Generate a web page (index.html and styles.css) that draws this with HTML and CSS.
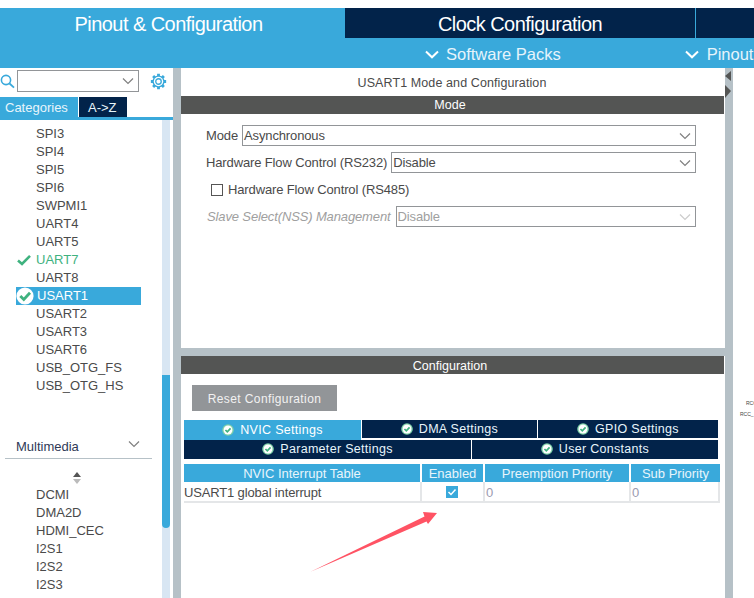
FILE: index.html
```html
<!DOCTYPE html>
<html lang="en">
<head>
<meta charset="utf-8">
<title>USART1 Mode and Configuration</title>
<link rel="stylesheet" href="styles.css">
</head>
<body>
<svg width="0" height="0" class="defs">
  <defs>
    <symbol id="chev" viewBox="0 0 12 8"><path d="M1 1.500 6 6.500 11 1.500" fill="none" stroke="currentColor" stroke-width="1.200"/></symbol>
    <symbol id="subchev" viewBox="0 0 14 9"><path d="M1 1.500 7 7.300 13 1.500" fill="none" stroke="currentColor" stroke-width="2"/></symbol>
    <symbol id="ok" viewBox="0 0 14 14"><circle cx="7" cy="7" r="6.800" fill="#7fd0a8"/><circle cx="7" cy="7" r="5.200" fill="#fff"/><path d="M4 7 6.200 9.200 10 5.200" fill="none" stroke="#3fb27f" stroke-width="2"/></symbol>
    <symbol id="okbig" viewBox="0 0 18 18"><circle cx="9" cy="9" r="8.600" fill="#fff"/><path d="M4.300 9 7.800 12.500 14 5.800" fill="none" stroke="#3fb27f" stroke-width="2.800"/></symbol>
  </defs>
</svg>
<div class="page">
  <header class="top">
    <div class="tabs">
      <div class="tab tab-on">Pinout &amp; Configuration</div>
      <div class="tab tab-clock">Clock Configuration</div>
      <div class="tab tab-rest"></div>
    </div>
    <div class="subbar">
      <div class="sub sub-packs"><svg class="sub-chev"><use href="#subchev"/></svg>Software Packs</div>
      <div class="sub sub-pinout"><svg class="sub-chev"><use href="#subchev"/></svg>Pinout</div>
    </div>
  </header>
  <div class="body">
    <aside class="left">
      <div class="search">
        <svg class="mag" viewBox="0 0 15 15"><circle cx="6" cy="6" r="4.600" fill="none" stroke="#39a9db" stroke-width="1.600"/><path d="M9.500 9.500 14 13.600" stroke="#39a9db" stroke-width="1.800"/></svg>
        <div class="sel sel-search"><svg class="chev"><use href="#chev"/></svg></div>
        <svg class="gear" viewBox="0 0 18 18"><path d="M9 .9v16.200M.9 9h16.200M3.300 3.300l11.400 11.400M3.300 14.700 14.700 3.300" stroke="#39a9db" stroke-width="3"/><circle cx="9" cy="9" r="6.400" fill="#39a9db"/><circle cx="9" cy="9" r="5" fill="#fff"/><circle cx="9" cy="9" r="2.900" fill="none" stroke="#39a9db" stroke-width="1.400"/></svg>
      </div>
      <div class="cat-tabs">
        <div class="cat cat-on">Categories</div>
        <div class="cat cat-off">A-&gt;Z</div>
      </div>
      <div class="listwrap">
        <div class="list">
          <ul class="items">
            <li>SPI3</li><li>SPI4</li><li>SPI5</li><li>SPI6</li><li>SWPMI1</li><li>UART4</li><li>UART5</li>
            <li class="green"><svg class="tick" viewBox="0 0 14 12"><path d="M1 6.500 5 10 13 1.800" fill="none" stroke="#3fb27f" stroke-width="2.600"/></svg>UART7</li>
            <li>UART8</li>
            <li class="picked"><svg class="okbig"><use href="#okbig"/></svg>USART1</li>
            <li>USART2</li><li>USART3</li><li>USART6</li><li>USB_OTG_FS</li><li>USB_OTG_HS</li>
          </ul>
          <div class="group">Multimedia<svg class="chev-group"><use href="#chev"/></svg></div>
          <div class="sort"><svg viewBox="0 0 8 12" width="8" height="12"><path d="M4 0 8 5H0Z" fill="#555"/><path d="M4 12 8 7H0Z" fill="#bbb"/></svg></div>
          <ul class="items items-media">
            <li>DCMI</li><li>DMA2D</li><li>HDMI_CEC</li><li>I2S1</li><li>I2S2</li><li>I2S3</li><li>JPEG</li>
          </ul>
        </div>
        <div class="track"><div class="thumb"></div></div>
      </div>
    </aside>
    <div class="split"></div>
    <main class="main">
      <section class="mode">
        <h1 class="title">USART1 Mode and Configuration</h1>
        <div class="bar">Mode</div>
        <div class="form">
          <div class="row"><span>Mode</span><div class="sel">Asynchronous<svg class="chev"><use href="#chev"/></svg></div></div>
          <div class="row"><span>Hardware Flow Control (RS232)</span><div class="sel">Disable<svg class="chev"><use href="#chev"/></svg></div></div>
          <div class="row row-check"><i class="box"></i><span>Hardware Flow Control (RS485)</span></div>
          <div class="row row-off"><span>Slave Select(NSS) Management</span><div class="sel">Disable<svg class="chev"><use href="#chev"/></svg></div></div>
        </div>
      </section>
      <div class="hsplit"></div>
      <section class="config">
        <div class="bar">Configuration</div>
        <button class="reset">Reset Configuration</button>
        <div class="ctabs ctabs-1">
          <div class="ctab c-on c-nvic"><svg class="ok"><use href="#ok"/></svg>NVIC Settings</div>
          <div class="ctab c-dma"><svg class="ok"><use href="#ok"/></svg>DMA Settings</div>
          <div class="ctab c-gpio"><svg class="ok"><use href="#ok"/></svg>GPIO Settings</div>
        </div>
        <div class="ctabs ctabs-2">
          <div class="ctab c-param"><svg class="ok"><use href="#ok"/></svg>Parameter Settings</div>
          <div class="ctab c-user"><svg class="ok"><use href="#ok"/></svg>User Constants</div>
        </div>
        <div class="table">
          <div class="th">NVIC Interrupt Table</div>
          <div class="th">Enabled</div>
          <div class="th">Preemption Priority</div>
          <div class="th">Sub Priority</div>
          <div class="td">USART1 global interrupt</div>
          <div class="td td-c"><svg class="checked" viewBox="0 0 12 12"><rect width="12" height="12" fill="#39a9db"/><path d="M2.500 6 5 8.500 9.500 3.500" fill="none" stroke="#fff" stroke-width="1.500"/></svg></div>
          <div class="td td-n">0</div>
          <div class="td td-n">0</div>
        </div>
      </section>
    </main>
    <div class="split split-r">
      <svg class="arrows" viewBox="0 0 7 28" width="7" height="28"><path d="M6 1V11L0 6Z" fill="#545554"/><path d="M0 15V28L6 21Z" fill="#545554"/></svg>
    </div>
    <div class="canvas"></div>
  </div>
</div>
<span class="pin pin-a">RCC</span>
<span class="pin pin-b">RCC_</span>
<svg class="arrow" viewBox="0 0 754 598" width="754" height="598"><path d="M310 572 424.500 516.500 423 512 437 513 428 524 426.500 521.500Z" fill="#ff5364"/></svg>
</body>
</html>
```

FILE: styles.css
```css
* { box-sizing: border-box; }
html, body { margin: 0; padding: 0; background: #fff; }
body { width: 754px; height: 598px; overflow: hidden; position: relative; font-family: "Liberation Sans", Arial, sans-serif; color: #4a4a4a; }
.defs { position: absolute; }
.page { padding-top: 8px; height: 598px; display: flex; flex-direction: column; }

.top { background: #39a9db; height: 60px; flex: none; }
.tabs { display: flex; height: 30px; color: #fff; font-size: 20px; letter-spacing: -0.55px; }
.tab { display: flex; align-items: center; justify-content: center; padding-top: 3px; }
.tab-on { width: 344px; padding-right: 7px; }
.tab-clock { width: 350px; margin-left: 1px; background: #02234a; }
.tab-rest { flex: 1; margin-left: 1px; background: #02234a; }
.subbar { display: flex; height: 30px; color: #e6f4fb; font-size: 16.500px; align-items: center; padding-top: 3px; }
.sub { display: flex; align-items: center; white-space: nowrap; }
.sub-chev { width: 14px; height: 9px; margin-right: 7px; color: #fff; }
.sub-packs { margin-left: 425px; }
.sub-pinout { margin-left: 124px; }
.sub-pinout .sub-chev { margin-right: 8px; }

.body { flex: 1; display: flex; min-height: 0; }
.left { width: 173px; flex: none; display: flex; flex-direction: column; min-height: 0; }
.search { display: flex; align-items: center; height: 29px; padding-bottom: 3px; flex: none; }
.mag { width: 15px; height: 15px; margin-right: 2px; flex: none; }
.gear { width: 17px; height: 17px; margin-left: 11px; flex: none; }
.sel { position: relative; border: 1px solid #929598; height: 21px; font-size: 13px; line-height: 19px; padding-left: 1px; color: #4a4a4a; background: #fff; }
.sel-search { width: 122px; height: 22px; flex: none; }
.chev { position: absolute; right: 4px; top: 6px; width: 12px; height: 8px; color: #808080; }
.cat-tabs { display: flex; height: 23px; border-bottom: 3px solid #39a9db; flex: none; font-size: 13px; color: #e8f5fb; }
.cat { display: flex; align-items: center; height: 20px; padding-left: 5px; }
.cat-on { width: 78px; background: #39a9db; }
.cat-off { width: 48px; margin-left: 1px; background: #02234a; padding-left: 9px; }
.listwrap { flex: 1; min-height: 0; display: flex; overflow: hidden; }
.list { width: 162px; flex: none; overflow: hidden; padding-top: 5px; }
.track { width: 8px; background: #d8e6f3; flex: none; padding-top: 255px; }
.thumb { height: 153px; background: #39a9db; border-radius: 0 0 4px 4px; }
.items { list-style: none; margin: 0; padding: 0 21px 0 16px; font-size: 13px; color: #4a4a4a; }
.items li { position: relative; height: 18px; line-height: 18px; padding-left: 20px; white-space: nowrap; }
.items .green { color: #3fb27f; }
.tick { position: absolute; left: 1px; top: 3px; width: 14px; height: 12px; }
.items .picked { background: #39a9db; color: #fff; padding-left: 21px; }
.okbig { position: absolute; left: 0; top: 0; width: 18px; height: 18px; }
.group { position: relative; margin: 38px 10px 0 5px; height: 26px; border-bottom: 1px solid #b6c1c7; padding: 5px 0 0 11px; font-size: 13px; line-height: 17px; color: #2f3a57; }
.chev-group { position: absolute; right: 12px; top: 7px; width: 12px; height: 8px; color: #808080; }
.sort { height: 23px; padding: 13px 0 0 73px; line-height: 0; }
.items-media { padding-top: 4px; }

.split { width: 8px; flex: none; background: #b6c1c7; }
.main { width: 544px; flex: none; display: flex; flex-direction: column; min-height: 0; }
.mode { height: 280px; flex: none; }
.title { margin: 0; height: 28px; padding-right: 2px; font-weight: normal; font-size: 12.500px; line-height: 30px; text-align: center; color: #4a4a4a; letter-spacing: 0.1px; }
.bar { width: 543px; height: 18px; padding-right: 5px; background: #545554; color: #fff; font-size: 12.500px; line-height: 18px; text-align: center; }
.config .bar { line-height: 20px; }
.form { padding: 11px 29px 0 25px; font-size: 13px; letter-spacing: -0.13px; }
.row { display: flex; align-items: center; height: 21px; margin-bottom: 6px; white-space: nowrap; }
.row > span { margin-right: 4px; }
.row .sel { flex: 1; }
.row-check { padding-left: 5px; }
.box { width: 12px; height: 12px; border: 1px solid #555; margin-right: 5px; flex: none; }
.row-off { padding-left: 1px; }
.row-off > span { font-style: italic; color: #a0a0a0; margin-right: 5px; }
.row-off .sel { color: #a0a0a0; }
.row-off .chev { color: #ccc; }

.hsplit { height: 8px; flex: none; background: #b6c1c7; }
.config { flex: 1; min-height: 0; }
.reset { display: block; width: 145px; height: 26px; margin: 11px 0 9px 11px; border: 0; padding: 2px 0 0; background: #929598; color: #f2f2f2; font: 12px/24px "Liberation Sans", Arial, sans-serif; letter-spacing: 0.4px; }
.ctabs { display: flex; margin-left: 3px; width: 534px; color: #e8f5fb; font-size: 12.500px; letter-spacing: 0.3px; }
.ctabs-1 { height: 20px; gap: 1px; }
.ctabs-2 { height: 19px; gap: 1px; }
.ctabs-2 .ctab { padding-bottom: 1px; }
.ctab { background: #02234a; display: flex; align-items: center; justify-content: center; }
.ctabs-1 .ctab { height: 18px; }
.ctabs-1 .c-on { background: #39a9db; color: #fff; height: 20px; }
.c-nvic { width: 177px; }
.c-dma { width: 175px; }
.c-gpio { flex: 1; }
.c-param { width: 287px; }
.c-user { flex: 1; }
.ok { width: 12px; height: 12px; margin-right: 6px; flex: none; }
.table { display: grid; grid-template-columns: 238px 63px 146px 89px; grid-template-rows: 18px 21px; margin: 5px 0 0 3px; width: 536px; font-size: 13px; }
.th { background: #39a9db; color: #e8f5fb; text-align: center; line-height: 19px; margin-right: 2px; }
.th:nth-child(4) { margin-right: 0; }
.td { border-bottom: 2px solid #e4e6e8; border-right: 2px solid #e4e6e8; padding-top: 1px; line-height: 19px; white-space: nowrap; letter-spacing: -0.15px; }
.td-c { display: flex; justify-content: center; padding-top: 4px; padding-right: 2px; }
.td-n { color: #9a9ab0; padding-left: 1px; }
.checked { width: 12px; height: 12px; }

.arrows { display: block; margin-top: 2px; }
.canvas { flex: 1; }
.pin { position: absolute; font-size: 5px; line-height: 6px; color: #444; white-space: nowrap; }
.pin-a { left: 746px; top: 400px; }
.pin-b { left: 740px; top: 411px; }
.arrow { position: absolute; left: 0; top: 0; pointer-events: none; }
```
